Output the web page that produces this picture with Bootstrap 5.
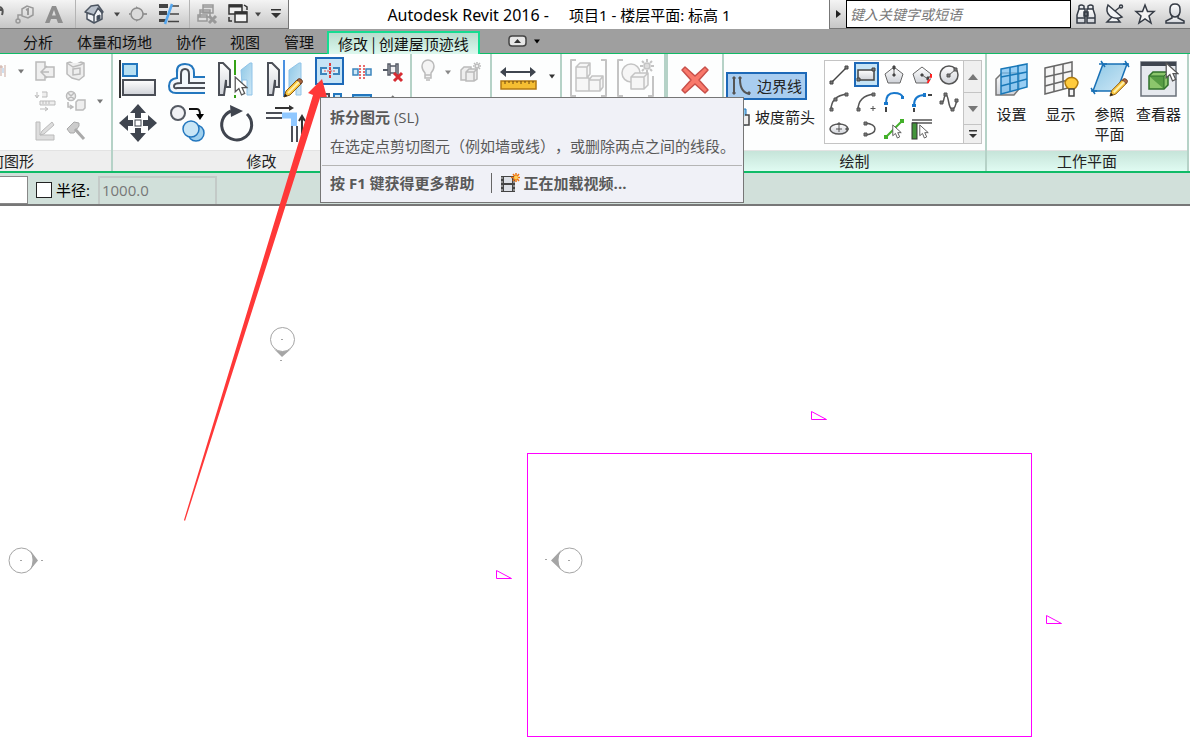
<!DOCTYPE html>
<html lang="zh-CN">
<head>
<meta charset="utf-8">
<meta name="viewport" content="width=device-width, initial-scale=1">
<title>Autodesk Revit 2016</title>
<link href="https://cdn.jsdelivr.net/npm/bootstrap@5.3.0/dist/css/bootstrap.min.css" rel="stylesheet">
<style>
body{font-family:"Open Sans","Noto Sans CJK SC",sans-serif;font-size:15px;line-height:20px;color:#222;background:#fff}
svg{display:block;flex:none;overflow:visible}
button{background:none;border:0;padding:0;color:inherit;display:flex;align-items:center;justify-content:center}
.title-strip{height:29px}
.tool-shade{background:linear-gradient(#f4f4f4,#c6c6c6);border-bottom:1px solid #777}
.quick-bar{display:grid;grid-template-columns:12px 26px 32px 10px 28px 18px 24px 38px 2px 34px 28px 12px 24px;border-right:1px solid #777}
.rule-v{width:1px;height:28px;background:#b4b4b4;margin:auto}
.app-title{color:#000;font-family:"Noto Sans","Noto Sans CJK SC",sans-serif}
.app-name{font-size:16px}
.info-center{width:361px;border-left:1px solid #777}
.info-search{width:225px;height:28px;border:1px solid #000;padding:0 3px;font-style:italic;font-size:14px;background:#fff;color:#666;outline:0}
.info-search::placeholder{color:#777;opacity:1}
.tab-strip{height:25px;background:#9f9f9f;border-bottom:1px solid #10bb67;padding-left:11px;font-family:"Noto Sans CJK SC",sans-serif}
.tab-strip a{color:#111;padding:3px 12px 0;height:24px;text-decoration:none;white-space:nowrap}
.tab-strip a.current{margin:2px 0 0 1px;padding:1px 9px 0;height:23px;border:2px solid #15dc91;border-bottom:0;background:linear-gradient(#b8dccd,#dcf8ee)}
.ribbon{border-bottom:2px solid #10bb67;background:#fdfefe}
.pane{border-right:2px solid #b5d2c7;flex:none}
.pane-body{height:96px;overflow:hidden}
.pane-name{height:21px;background:#eee;border-top:1px solid #e3e3e3;overflow:hidden;white-space:nowrap;color:#222}
.ctx .pane-name{background:linear-gradient(#c6e4d9,#e0fbf2)}
.pane-geo{width:113px}.pane-geo .wide-name{width:214px;flex:none}
.pane-mod{width:299px}.pane-view{width:80px}.pane-measure{width:70px}.pane-make{width:106px;border-right-width:4px}
.pane-mode{width:56px}.pane-draw{width:263px}.pane-plane{width:202px}
.geo-grid{display:grid;grid-template-columns:12px 18px 30px 32px 16px;grid-template-rows:repeat(3,30px);padding-top:2px}
.edit-tools{gap:6px;padding-top:3px}
.big-grid{display:grid;grid-template-columns:repeat(4,49px);grid-template-rows:repeat(2,44px)}
.small-grid{display:grid;grid-template-columns:repeat(3,31px);grid-template-rows:29px 30px}
.picked{border:2px solid #1d69b8;background:#c6e4f6}
.small-grid .picked{width:29px;height:28px}
.draw-body{padding:6px 3px 0 2px}
.mode-list{padding-top:12px;gap:3px}
.mode-btn{height:28px;gap:5px;padding:0 4px;justify-content:flex-start;white-space:nowrap}
.mode-btn.picked{background:#a9cdf0;width:81px}
.gallery{border:1px solid #c4c4c4;width:158px;height:84px;background:#fff}
.shape-grid{display:grid;grid-template-columns:repeat(5,1fr);grid-template-rows:repeat(3,27px);width:138px}
.shape-grid .picked{margin:1px}
.scroller{width:18px;border-left:1px solid #c4c4c4;background:#efefef}
.scroller button{border-bottom:1px solid #c4c4c4;height:32px}
.scroller button:last-child{height:18px;border:0}
.plane-btn{flex-direction:column;justify-content:flex-start;width:49px;padding-top:6px;white-space:nowrap}
.plane-btn svg{margin-bottom:6px}
.options{height:33px;background:#d1e0da;border-bottom:2px solid #777}
.kind-box{width:28px;height:28px;border:1px solid #888;border-left:0;background:#fff}
.tick{appearance:none;width:16px;height:16px;border:1px solid #222;background:#fff;margin:0 4px 0 8px}
.radius-box{width:119px;height:28px;background:#d1e0da;border:2px solid #c3cac7;border-bottom:0;padding:0 2px 3px;color:#777;margin-left:8px}
.help-tip{position:absolute;left:320px;top:97px;width:424px;background:#f0f1f7;border:1px solid #767676;color:#595959;z-index:3;white-space:nowrap}
.help-text{padding:9px 9px;display:grid;gap:9px;text-spacing-trim:space-all;font-feature-settings:"chws" 0,"halt" 0}
.help-foot{border-top:1px solid #b5b5b5;margin:0 1px;padding:7px 8px 9px;font-weight:700}
.foot-bar{width:1px;height:20px;background:#666;margin:0 8px 0 16px}
.pointer{position:absolute;left:0;top:0;z-index:2;pointer-events:none}
.drawing{min-height:539px}
</style>
</head>
<body>
<svg width="0" height="0" class="position-absolute" aria-hidden="true"><defs>
<linearGradient id="steel" x1="0" y1="0" x2="0" y2="1"><stop offset="0" stop-color="#fff"/><stop offset="1" stop-color="#cfd2d8"/></linearGradient>
<linearGradient id="sky" x1="0" y1="0" x2="1" y2="1"><stop offset="0" stop-color="#8fc8e6"/><stop offset="1" stop-color="#cfe8f6"/></linearGradient>
<symbol id="down" viewBox="0 0 8 5"><path d="M1 0.500H7L4 4.500Z"/></symbol>
<symbol id="cursor" viewBox="0 0 13 19"><path d="M1 1V15L4.500 12L7 18L10 16.500L7.500 11H12Z" fill="#fff" stroke="#555" stroke-width="1.200"/></symbol>
<symbol id="pencil" viewBox="0 0 20 20"><path d="M1 19L3 13L14 2L18 6L7 17Z" fill="#f9c63e" stroke="#8a5a14"/><path d="M14 2Q16-.5 18.500 1.500T18 6Z" fill="#a9623a" stroke="#65402c"/><path d="M5 15L16 4" stroke="#fff2b0" stroke-width="2"/><path d="M1 19L2 15.500L4.500 18Z" fill="#222"/></symbol>
</defs></svg>

<div class="min-vh-100 d-flex flex-column position-relative overflow-hidden">
<header class="title-strip d-flex">
  <div class="quick-bar tool-shade flex-shrink-0">
    <button aria-label="撤销"><svg width="12" height="24"><path d="M0 5Q4 7 2 13M0 8H3" stroke="#555" stroke-width="2" fill="none"/></svg></button>
    <button aria-label="标记"><svg width="20" height="20" fill="none" stroke="#999" stroke-width="1.500"><path d="M7 5L12 2L18 4V11L13 14L7 12ZM7 11H3V16"/><circle cx="3" cy="17" r="2"/><path d="M11 6L13 5V11" stroke-width="2"/></svg></button>
    <button aria-label="文字"><svg width="18" height="18"><path d="M0 18L7 1H11L18 18H13L11.500 14H6L4.500 18ZM7 10.500H10.800L9 5Z" fill="#8e8e8e"/></svg></button>
    <span class="rule-v"></span>
    <button aria-label="三维视图"><svg width="20" height="20" stroke="#4d5662" stroke-width="1.500" stroke-linejoin="round"><path d="M3 9V15L10 19L18 15V8L14 4L10 11L3 9Z" fill="#f1f3f6"/><path d="M1 8L7 2L14 1L19 8L18 9L14 4L10 11Z" fill="#b9c1cc"/><path d="M10 11V19" /><path d="M13 12L16 11V15L13 16.500Z" fill="#3b4757" stroke-width="1"/></svg></button>
    <button aria-label="更多"><svg width="8" height="5" fill="#444"><use href="#down"/></svg></button>
    <button aria-label="剖面"><svg width="18" height="18"><path d="M7 1L16 9L7 17Z" fill="#999"/><circle cx="8" cy="9" r="6" fill="#dadada" stroke="#8c8c8c" stroke-width="1.500"/><path d="M0 9H2M15 9H18" stroke="#999" stroke-width="2"/></svg></button>
    <button aria-label="细线"><svg width="22" height="20"><path d="M1 2H10M1 9H9" stroke="#444" stroke-width="4"/><path d="M1 16.500H8" stroke="#444" stroke-width="3"/><path d="M14 2H21M12 10H21M10 17.500H21" stroke="#444" stroke-width="1.500"/><path d="M14 0L7 20" stroke="#55a7ef" stroke-width="2.500"/></svg></button>
    <span class="rule-v"></span>
    <button aria-label="关闭隐藏窗口"><svg width="20" height="20" fill="#dedede" stroke="#999" stroke-width="1.500"><path d="M6 1H16V9H6ZM6 3H16M3 6H13V13H3ZM3 8H13M1 11H10V17H1ZM1 13H10"/><path d="M12 12L19 19M19 12L12 19" stroke-width="3"/></svg></button>
    <button aria-label="切换窗口"><svg width="20" height="20" fill="none" stroke="#333" stroke-width="1.500"><path d="M1 1H14V10H1Z" fill="#f0f0f0"/><path d="M1 2H14" stroke-width="3"/><path d="M7 8H19V18H7Z" fill="#f5f5f5"/><path d="M7 9H19" stroke-width="3"/><path d="M1 13V17H4M16 1L19 3V6"/></svg></button>
    <button aria-label="窗口列表"><svg width="8" height="5" fill="#444"><use href="#down"/></svg></button>
    <button aria-label="自定义"><svg width="12" height="10" fill="#333"><path d="M1 0H11V1.500H1ZM1 4H11L6 9Z"/></svg></button>
  </div>
  <div class="app-title flex-grow-1 d-flex align-items-center justify-content-center text-nowrap"><span class="app-name">Autodesk Revit 2016 -</span><span class="ms-3 ps-1">项目1 - 楼层平面: 标高 1</span></div>
  <div class="info-center tool-shade d-flex flex-shrink-0">
    <button class="px-1" aria-label="展开"><svg width="8" height="10"><path d="M2 1V9L7 5Z" fill="#222"/></svg></button>
    <input class="info-search" aria-label="搜索" placeholder="键入关键字或短语">
    <div class="d-flex flex-fill">
    <button class="flex-fill" aria-label="搜索"><svg width="20" height="20" fill="url(#steel)" stroke="#353b45" stroke-width="1.500"><path d="M3 5V2Q5 0 8 2V6M12 6V2Q15 0 17 2V5"/><path d="M1 19V11L3 5H9V19ZM11 19V5H17L19 11V19ZM8 8H12V12H8ZM1 14H9M11 14H19"/></svg></button>
    <button class="flex-fill" aria-label="通讯中心"><svg width="18" height="20" fill="#f3f4f6" stroke="#353b45" stroke-width="1.500"><path d="M7 12L1 18H14L10 13"/><path d="M2 1L16 13Q9 16 4 12T2 1Z"/><path d="M9 7L14 3" /><circle cx="15" cy="2.500" r="1.500"/></svg></button>
    <button class="flex-fill" aria-label="收藏夹"><svg width="20" height="20"><path d="M10 1L12.500 7.500H19L14 12L16 19L10 15L4 19L6 12L1 7.500H7.500Z" fill="#f3f3f3" stroke="#353b45" stroke-width="1.500"/></svg></button>
    <button class="flex-fill" aria-label="登录"><svg width="20" height="20" fill="url(#steel)" stroke="#353b45" stroke-width="1.500"><path d="M1 19V17L7 14V12H13V14L19 17V19Z"/><path d="M5 5Q5 0 10 0T15 5V8Q14 13 10 13T5 8Z"/></svg></button>
    </div>
  </div>
</header>

<nav class="tab-strip d-flex" aria-label="功能区选项卡">
  <a href="#">分析</a><a href="#">体量和场地</a><a href="#">协作</a><a href="#">视图</a><a href="#">管理</a><a href="#" class="current" aria-current="page">修改 | 创建屋顶迹线</a>
  <button class="ms-4 ps-1" aria-label="最小化功能区"><svg width="34" height="12"><rect x="1" y="1" width="17" height="10" rx="3" fill="#e8e8e8" stroke="#444" stroke-width="1.500"/><path d="M6 8H13L9.500 4Z" fill="#333"/><path d="M26 4.500H32L29 8.500Z" fill="#000"/></svg></button>
</nav>

<main class="d-flex flex-column flex-grow-1">
<section class="ribbon d-flex">
  <div class="pane pane-geo">
    <div class="pane-body geo-grid">
      <button aria-label="剪切"><svg width="12" height="16"><path d="M0 4H3M1 2V13M5 2V14" stroke="#c9a9a0" fill="none"/><path d="M3 5V10" stroke="#9fbfe0"/></svg></button>
      <button aria-label="更多"><svg width="8" height="5" fill="#777"><use href="#down"/></svg></button>
      <button aria-label="连接端切割"><svg width="20" height="20" fill="#efefef" stroke="#bbb" stroke-width="1.500"><path d="M1 1H10V6H19V16H10V19H1Z"/><path d="M12 5L6 11L12 17M7 11H14" fill="none"/></svg></button>
      <button aria-label="连接"><svg width="20" height="20" fill="#eee" stroke="#bbb" stroke-width="1.500"><path d="M1 2L4 1L9 4L15 1L18 2V15L13 19L6 17L1 13Z"/><path d="M1 2L7 6L14 4L18 2M7 8L14 7V13L7 14Z"/></svg></button><span></span>
      <span></span><span></span>
      <button aria-label="拆分面"><svg width="20" height="20" stroke="#bbb" fill="#eee"><path d="M2 1V6M0 4L2 7L4 4M7 1H12V6H7M5 10H20V14H5ZM8 10V13M11 10V13M14 10V13M5 18H12M10 16L13 18L10 20"/></svg></button>
      <button aria-label="取消连接"><svg width="20" height="20" stroke="#bbb" fill="#eee" stroke-width="1.500"><circle cx="5" cy="5" r="4.500"/><path d="M2 2L8 8M2 8L8 2M2 11V16H6M4 14L7 16L4 18M10 11L12 9H19V17L17 19H10Z"/></svg></button>
      <button aria-label="更多"><svg width="8" height="5" fill="#777"><use href="#down"/></svg></button>
      <span></span><span></span>
      <button aria-label="墙连接"><svg width="20" height="20" stroke="#bbb" fill="#ddd"><path d="M1 1H5V14H19V19H1ZM5 14L7 10L17 1L19 4L9 13Z"/></svg></button>
      <button aria-label="拆除"><svg width="20" height="20" stroke="#aaa" fill="#ccc"><path d="M1 8L8 1L13 2V5L8 12H4Z"/><path d="M9 8L18 18" stroke-width="3"/></svg></button>
    </div>
    <div class="pane-name d-flex justify-content-end"><div class="wide-name text-center">几何图形</div></div>
  </div>

  <div class="pane pane-mod">
    <div class="pane-body edit-tools d-flex">
      <div class="big-grid">
      <button aria-label="对齐"><svg width="38" height="38"><path d="M1 0V38" stroke="#333" stroke-width="2"/><rect x="4" y="4" width="14" height="12" fill="#b7dff2" stroke="#2377be" stroke-width="2"/><rect x="4" y="20" width="32" height="15" fill="url(#steel)" stroke="#4b4f57" stroke-width="2"/></svg></button>
      <button aria-label="偏移"><svg width="38" height="34" fill="none"><path d="M37 15H26V11Q26 2 17 2T9 11V16Q1 17 1 24T8 31H37" stroke="#2377be" stroke-width="2" fill="#f3f8fc"/><path d="M37 21H21V12Q21 7 17 7T13 12V21Q6 21 6 24T9 26H37" stroke="#4b4f57" stroke-width="2"/></svg></button>
      <button aria-label="镜像 - 拾取轴"><svg width="36" height="38"><path d="M1 3H5L12 10V27H8V20L6 35H1Z" fill="url(#steel)" stroke="#4b4f57" stroke-width="2"/><path d="M23 10L32 3H34V35H29V20H24V25Z" fill="url(#sky)" stroke="#8fc3e8"/><path d="M17 0V38" stroke="#35a316" stroke-width="2" stroke-dasharray="15 20 3 1"/><g transform="translate(16 16)"><use href="#cursor" width="14" height="20"/></g></svg></button>
      <button aria-label="镜像 - 绘制轴"><svg width="36" height="38"><path d="M1 3H5L12 10V27H8V20L6 35H1Z" fill="url(#steel)" stroke="#4b4f57" stroke-width="2"/><path d="M22 10L32 3H34V35H29V20L22 30Z" fill="url(#sky)" stroke="#8fc3e8"/><path d="M17 0V37" stroke="#4b91e1" stroke-width="2"/><g transform="translate(16 18)"><use href="#pencil" width="20" height="20"/></g></svg></button>
      <button aria-label="移动"><svg width="38" height="38"><path d="M19 0L27 9H22V14H16V9H11ZM19 38L27 29H22V24H16V29H11ZM0 19L9 11V16H14V22H9V27ZM38 19L29 11V16H24V22H29V27Z" fill="#3f454f"/><rect x="16" y="16" width="6" height="6" fill="#fff" stroke="#3f454f"/></svg></button>
      <button aria-label="复制"><svg width="36" height="38"><circle cx="9" cy="9" r="7" fill="#f1f2f5" stroke="#555a63" stroke-width="2"/><path d="M20 5H28Q31 5 31 11" fill="none" stroke="#111" stroke-width="2"/><path d="M27 10H35L31 16Z"/><circle cx="27" cy="29" r="8" fill="#9fd0ee" stroke="#2377be" stroke-width="1.500"/><circle cx="22" cy="25" r="8" fill="#c9e6f6" stroke="#2377be" stroke-width="1.500"/></svg></button>
      <button aria-label="旋转"><svg width="34" height="38"><path d="M28 10A15 15 0 1 1 12 7" fill="none" stroke="#40454f" stroke-width="3"/><path d="M11 1L24 7L12 13Z" fill="#40454f"/></svg></button>
      <button aria-label="修剪/延伸为角"><svg width="38" height="38" fill="none"><path d="M9 4H25" stroke="#333" stroke-width="2"/><path d="M23 1L28 4L23 7" fill="#333"/><path d="M0 9H16M0 14H16" stroke="#4b4f57" stroke-width="2"/><path d="M16 11.500H28V22" stroke="#8fc8ff" stroke-width="6"/><path d="M26 22V38M31 22V38" stroke="#4b4f57" stroke-width="2"/><path d="M36 14V30M33 17L36 12L39 17" stroke="#333" stroke-width="2"/></svg></button>
      </div>
      <div class="small-grid">
      <button class="picked" aria-label="拆分图元" aria-describedby="tip"><svg width="20" height="16" fill="none"><path d="M7 5H1V11H7M13 5H19V11H13" fill="#d8eef9" stroke="#3c85bd" stroke-width="2"/><path d="M10 0V16" stroke="#e23c3c" stroke-width="2" stroke-dasharray="3 1"/><path d="M4 8H16" stroke="#d55" stroke-dasharray="2 1"/></svg></button>
      <button aria-label="用间隙拆分"><svg width="20" height="16" fill="#cfe9f7" stroke="#3c85bd" stroke-width="1.500"><rect x="1" y="5" width="5" height="6"/><rect x="14" y="5" width="5" height="6"/><path d="M8 1V15M12 1V15" stroke="#e23c3c" stroke-dasharray="2 1"/></svg></button>
      <button aria-label="解锁"><svg width="20" height="20" fill="#f2f2f4"><path d="M0 8H5" stroke="#555b66" stroke-width="2"/><path d="M5 2H7V13H5ZM7 4H13V11H7ZM13 2H15V13H13Z" stroke="#555b66" stroke-width="1.500"/><path d="M11 11L19 19M19 11L11 19" stroke="#d72c32" stroke-width="3"/></svg></button>
      <button class="align-items-start pt-2" aria-label="阵列"><svg width="20" height="18" fill="#cfe9f7"><rect x="1" y="0" width="7" height="9" stroke="#4b4f57" stroke-width="2"/><rect x="13" y="0" width="7" height="9" stroke="#2377be" stroke-width="2"/></svg></button>
      <button class="align-items-start pt-2" aria-label="缩放"><svg width="20" height="18"><rect x="1" y="1" width="18" height="16" fill="#8bc6ea" stroke="#2377be" stroke-width="2"/></svg></button>
      <button aria-label="锁定"><svg width="20" height="18"><path d="M9 4L14 9" stroke="#777" stroke-width="2"/></svg></button>
      </div>
    </div>
    <div class="pane-name text-center">修改</div>
  </div>

  <div class="pane pane-view">
    <div class="pane-body d-flex pt-1 ps-1 align-items-start">
      <button class="px-1" aria-label="可见性"><svg width="16" height="24" fill="#f4f4f4" stroke="#bbb" stroke-width="1.500"><path d="M5 15Q2 12 2 8A6 6 0 0 1 14 8Q14 12 11 15V20H5ZM5 17H11M6 22H10"/></svg></button>
      <button class="px-1 pt-2" aria-label="更多"><svg class="mt-1" width="8" height="5" fill="#888"><use href="#down"/></svg></button>
      <button class="pt-1 px-1" aria-label="置换"><svg width="22" height="20" fill="#eee" stroke="#bbb" stroke-width="1.500"><path d="M1 8L4 5H11V15L8 18H1Z"/><path d="M6 10L9 7H17V17L14 19H6ZM6 10H14V19M14 10L17 7"/><circle cx="17" cy="4" r="2"/><path d="M17 0V1M17 7V8M13 4H14M20 4H21M14 1L15 2M20 7L19 6M20 1L19 2"/></svg></button>
    </div><div class="pane-name"></div>
  </div>
  <div class="pane pane-measure">
    <div class="pane-body d-flex pt-1 ps-1 align-items-start">
      <button class="pt-2 ps-1" aria-label="测量"><svg width="36" height="26"><path d="M2 6H34" stroke="#3f454f" stroke-width="2"/><path d="M0 6L6 1V11ZM36 6L30 1V11Z" fill="#3f454f"/><rect x="1" y="15" width="35" height="8" fill="#f5be32" stroke="#b37912" stroke-width="1.500"/><path d="M5 15V18M9 15V17M13 15V18M17 15V17M21 15V18M25 15V17M29 15V18M33 15V17" stroke="#684510"/></svg></button>
      <button class="pt-3 px-2 ms-1" aria-label="更多"><svg width="8" height="5" fill="#333"><use href="#down"/></svg></button>
    </div><div class="pane-name"></div>
  </div>
  <div class="pane pane-make">
    <div class="pane-body d-flex pt-1 ps-2 gap-2 align-items-start">
      <button aria-label="创建组"><svg width="38" height="38" fill="#f6f6f6" stroke="#c4c4c4" stroke-width="1.500" stroke-linejoin="round"><path d="M6 2H1V38H6M31 2H36V38H31" fill="none" stroke-width="2"/><path d="M6 9L10 5H20V16L17 20H6ZM6 9H17V20M17 9L20 5M6 20H19V33H6ZM19 22L22 18H33V29L30 33H19ZM19 22H30V33M30 22L33 18"/></svg></button>
      <button aria-label="创建类似实例"><svg width="38" height="38" fill="#f6f6f6" stroke="#c4c4c4" stroke-width="1.500" stroke-linejoin="round"><path d="M7 2H2V38H7M37 18V38H32" fill="none" stroke-width="2"/><circle cx="15" cy="15" r="9"/><path d="M15 19L19 15H32V27L28 31H15ZM15 19H28V31M28 19L32 15"/><circle cx="31" cy="8" r="3" fill="#ddd"/><path d="M31 1V4M31 12V15M24 8H27M35 8H38M26 3L28 5M36 13L34 11M36 3L34 5M26 13L28 11" stroke-width="2"/></svg></button>
    </div><div class="pane-name"></div>
  </div>
  <div class="pane pane-mode ctx">
    <div class="pane-body pt-2"><button class="mx-auto pt-1" aria-label="取消编辑模式"><svg width="28" height="28"><path d="M4 1L14 10L24 1L27 4L18 14L27 24L24 27L14 18L4 27L1 24L10 14L1 4Z" fill="#f9796b" stroke="#c8504a" stroke-width="1.500" stroke-linejoin="round"/></svg></button></div><div class="pane-name"></div>
  </div>

  <div class="pane pane-draw ctx">
    <div class="pane-body draw-body d-flex justify-content-between">
      <div class="mode-list d-flex flex-column">
        <button class="mode-btn picked" aria-pressed="true"><svg width="20" height="20" fill="none" stroke="#555" stroke-width="2"><path d="M2 3V18M8 3Q8 17 18 18"/><path d="M1 1H3V3H1ZM1 16H3V18H1ZM7 1H9V3H7ZM16 16H18V18H16Z" fill="#555" stroke-width="1"/></svg><span>边界线</span></button>
        <button class="mode-btn"><svg width="20" height="20"><path d="M10 2H16V18H10Z" fill="#8bc6ea" stroke="#2377be"/><path d="M15 8H19V18H10" fill="#eee" stroke="#444" stroke-width="1.500"/></svg><span>坡度箭头</span></button>
      </div>
      <div class="gallery d-flex align-self-start">
        <div class="shape-grid">
        <button aria-label="线"><svg width="20" height="20" stroke="#444"><path d="M2 18L18 2" stroke-width="1.500"/><path d="M1 16H4V19H1ZM16 1H19V4H16Z" fill="#777"/></svg></button>
        <button class="picked" aria-label="矩形"><svg width="20" height="16" stroke="#444"><rect x="2" y="3" width="16" height="10" fill="url(#steel)" stroke-width="1.500"/><path d="M1 11H4V14H1ZM16 1H19V4H16Z" fill="#777"/></svg></button>
        <button aria-label="内接多边形"><svg width="20" height="20" fill="url(#steel)" stroke="#666"><path d="M10 2L19 9L16 18H4L1 9Z"/><path d="M10 3V10"/><path d="M9 1H11V4H9ZM9 9H11V11H9Z" fill="#444" stroke="#444"/></svg></button>
        <button aria-label="外接多边形"><svg width="20" height="20" fill="url(#steel)" stroke="#666"><path d="M10 2L19 9L16 18H4L1 9Z"/><path d="M10 10L16 14"/><path d="M9 9H11V11H9ZM15 12H18V15H15Z" fill="#444" stroke="#444"/><path d="M19 9V12L15 19" stroke="#f22" stroke-width="2" stroke-dasharray="4 2"/></svg></button>
        <button aria-label="圆形"><svg width="20" height="20" fill="url(#steel)" stroke="#555"><circle cx="10" cy="10" r="9" stroke-width="1.500"/><path d="M10 10L16 5"/><path d="M8 9H11V12H8ZM15 3H18V6H15Z" fill="#777"/></svg></button>
        <button aria-label="起点终点半径弧"><svg width="20" height="20" fill="none" stroke="#555"><path d="M2 18Q2 4 18 2" stroke-width="1.500"/><path d="M1 16H4V19H1ZM5 6H8V9H5ZM16 1H19V4H16Z" fill="#777"/></svg></button>
        <button aria-label="圆心端点弧"><svg width="20" height="20" fill="none" stroke="#555"><path d="M2 18Q2 4 18 2" stroke-width="1.500"/><path d="M17 14V19M14.500 16.500H19.500M1 16H4V19H1ZM16 1H19V4H16Z" fill="#777"/></svg></button>
        <button aria-label="相切弧"><svg width="20" height="20" fill="none"><path d="M2 11Q2 1 10 1T19 6" stroke="#1878cc" stroke-width="2"/><path d="M0 10H4V13H0ZM17 4H20V7H17Z" fill="#1878cc"/><path d="M2 15V20" stroke="#444" stroke-width="2"/></svg></button>
        <button aria-label="圆角弧"><svg width="20" height="20" fill="none"><path d="M2 13Q2 3 13 3" stroke="#1878cc" stroke-width="2"/><path d="M0 12H4V15H0ZM11 1H14V5H11Z" fill="#1878cc"/><path d="M2 16V20M16 3H20" stroke="#444" stroke-width="2"/></svg></button>
        <button aria-label="样条曲线"><svg width="20" height="20" fill="none" stroke="#555"><path d="M2 10C6 12 4 3 7 3S9 17 13 17S16 12 18 9" stroke-width="1.500"/><path d="M1 9H4V12H1ZM5 1H8V4H5ZM12 16H15V19H12ZM16 7H19V10H16Z" fill="#777"/></svg></button>
        <button aria-label="椭圆"><svg width="20" height="14" fill="url(#steel)" stroke="#555"><ellipse cx="10" cy="7" rx="9" ry="5" stroke-width="1.500"/><path d="M10 4V10M7 7H13"/><path d="M9 1H11V3H9ZM17 6H19V8H17Z" fill="#777"/></svg></button>
        <button class="ps-2" aria-label="半椭圆"><svg width="14" height="16" fill="none" stroke="#555"><path d="M2 2Q12 3 12 8T2 14" stroke-width="1.500"/><path d="M1 1H4V4H1ZM1 12H4V15H1Z" fill="#777"/></svg></button>
        <button aria-label="拾取线"><svg width="20" height="20"><path d="M2 18L18 2" stroke="#43b02a" stroke-width="2"/><path d="M0 16H4V20H0ZM16 0H20V4H16Z" fill="#43b02a"/><g transform="translate(8 5)"><use href="#cursor" width="10" height="15"/></g></svg></button>
        <button aria-label="拾取墙"><svg width="20" height="20"><path d="M0 1H20M0 4H20" stroke="#555" stroke-width="1.500"/><rect x="0" y="4" width="5" height="16" fill="#43943b" stroke="#333"/><g transform="translate(7 5)"><use href="#cursor" width="10" height="15"/></g></svg></button>
        </div>
        <div class="scroller flex-fill">
          <button class="w-100" aria-label="上移"><svg width="10" height="6" fill="#777"><path d="M0 6H10L5 0Z"/></svg></button>
          <button class="w-100" aria-label="下移"><svg width="10" height="6" fill="#777"><path d="M0 0H10L5 6Z"/></svg></button>
          <button class="w-100" aria-label="展开"><svg width="10" height="8" fill="#333"><path d="M1 0H9V1.500H1ZM1 4H9L5 8Z"/></svg></button>
        </div>
      </div>
    </div>
    <div class="pane-name text-center">绘制</div>
  </div>

  <div class="pane pane-plane ctx">
    <div class="pane-body d-flex">
      <button class="plane-btn"><svg width="36" height="38"><path d="M2 19L8 13H25V29L20 35H2Z" fill="url(#steel)" stroke="#777" stroke-width="1.500"/><path d="M7 9L33 4V27L7 34Z" fill="#76bdf0" fill-opacity=".75" stroke="#1878b8" stroke-width="1.500"/><path d="M16 7V32M24 6V30M7 17L33 12M7 26L33 19" stroke="#1878b8" stroke-width="1.500"/></svg><span>设置</span></button>
      <button class="plane-btn"><svg width="36" height="38" fill="#f5f5f5" stroke="#666" stroke-width="1.500"><path d="M2 8L29 2V27L2 34Z"/><path d="M11 6V31M20 4V29M2 17L29 11M2 26L29 19"/><path d="M26 29Q22 26 22 22A7 7 0 0 1 35 22Q35 26 31 29Z" fill="#ffcb3d" stroke="#ae7a0d"/><path d="M26 29H31V36H26Z" stroke="#444"/></svg><span>显示</span></button>
      <button class="plane-btn"><svg width="38" height="38"><path d="M12 4H36L26 31H2Z" fill="url(#sky)" stroke="#1870b5" stroke-width="1.500"/><path d="M10 1L14 7M34 1L38 7M0 28L4 34M8 4H16M32 4H38M0 31H6" stroke="#1870b5" stroke-width="1.500"/><g transform="translate(18 18)"><use href="#pencil" width="19" height="19"/></g></svg><span>参照</span><span>平面</span></button>
      <button class="plane-btn"><svg width="38" height="38"><rect x="1" y="2" width="35" height="34" fill="#e6e9ee" stroke="#6a707a" stroke-width="1.500"/><path d="M1 4H36" stroke="#3f454f" stroke-width="4"/><path d="M9 16L13 12H28V25L24 29H9Z" fill="#8cc66c" stroke="#2f702b" stroke-width="1.500"/><path d="M9 16H24V29M24 16L28 12" fill="#579d44" stroke="#2f702b"/><g transform="translate(25 2)"><use href="#cursor" width="14" height="20"/></g></svg><span>查看器</span></button>
    </div>
    <div class="pane-name text-center">工作平面</div>
  </div>
</section>

<form class="options d-flex align-items-end">
  <input class="kind-box" aria-label="偏移量">
  <div class="d-flex align-items-center pb-1"><input class="tick" type="checkbox" id="useRadius"><label for="useRadius" class="text-black">半径:</label></div>
  <input class="radius-box" value="1000.0" aria-label="半径值" disabled>
</form>

<section class="drawing flex-grow-1" aria-label="楼层平面">
<svg width="100%" height="539" fill="none" stroke="#a5a5a5">
  <rect x="527.500" y="247.500" width="504" height="283" stroke="#f0f"/>
  <g stroke="#f0f"><path d="M811.500 205.500V213.500H826.500Z"/><path d="M496.500 364.500V372.500H511.500ZM1046.500 409.500V417.500H1061.500Z"/></g>
  <circle cx="282.500" cy="133.500" r="12"/><path d="M274 143Q282 148 291 143L282 151Z" fill="#a5a5a5" stroke="none"/><path d="M281 133.500H283M280 154.500H282"/>
  <circle cx="21.500" cy="354.500" r="12.500"/><path d="M30 344Q35 354 30 364L38 354.500Z" fill="#a5a5a5" stroke="none"/><path d="M20 354.500H22M41 354.500H43"/>
  <circle cx="569.500" cy="354.500" r="12.500"/><path d="M561 344Q556 354 561 364L551 354.500Z" fill="#a5a5a5" stroke="none"/><path d="M568 354.500H570M545 353.500H547"/>
</svg>
</section>
</main>

<svg class="pointer" width="340" height="530" aria-hidden="true"><path d="M322 79L328 101L320 98L185 521L184 520L313 95L308 93Z" fill="#ff3838"/></svg>

<aside class="help-tip" id="tip" role="tooltip">
  <div class="help-text"><div><strong>拆分图元</strong> (SL)</div><div>在选定点剪切图元（例如墙或线），或删除两点之间的线段。</div></div>
  <div class="help-foot d-flex align-items-center"><span>按 F1 键获得更多帮助</span><span class="foot-bar"></span>
  <svg width="20" height="20"><path d="M1 3H15V19H1Z" fill="#444"/><path d="M4 4H12V10H4ZM4 12H12V18H4Z" fill="#dcdfe5"/><path d="M2 4V19M14 4V19" stroke="#ddd" stroke-dasharray="2 2"/><path d="M16 0V9M11 4.500H20M13 1L19 8M19 1L13 8" stroke="#ed7412" stroke-width="1.500"/><circle cx="16" cy="4.500" r="2" fill="#ffcf55"/></svg>
  <span class="ms-1">正在加载视频...</span></div>
</aside>
</div>
<script src="https://cdn.jsdelivr.net/npm/bootstrap@5.3.0/dist/js/bootstrap.bundle.min.js"></script>
</body>
</html>
